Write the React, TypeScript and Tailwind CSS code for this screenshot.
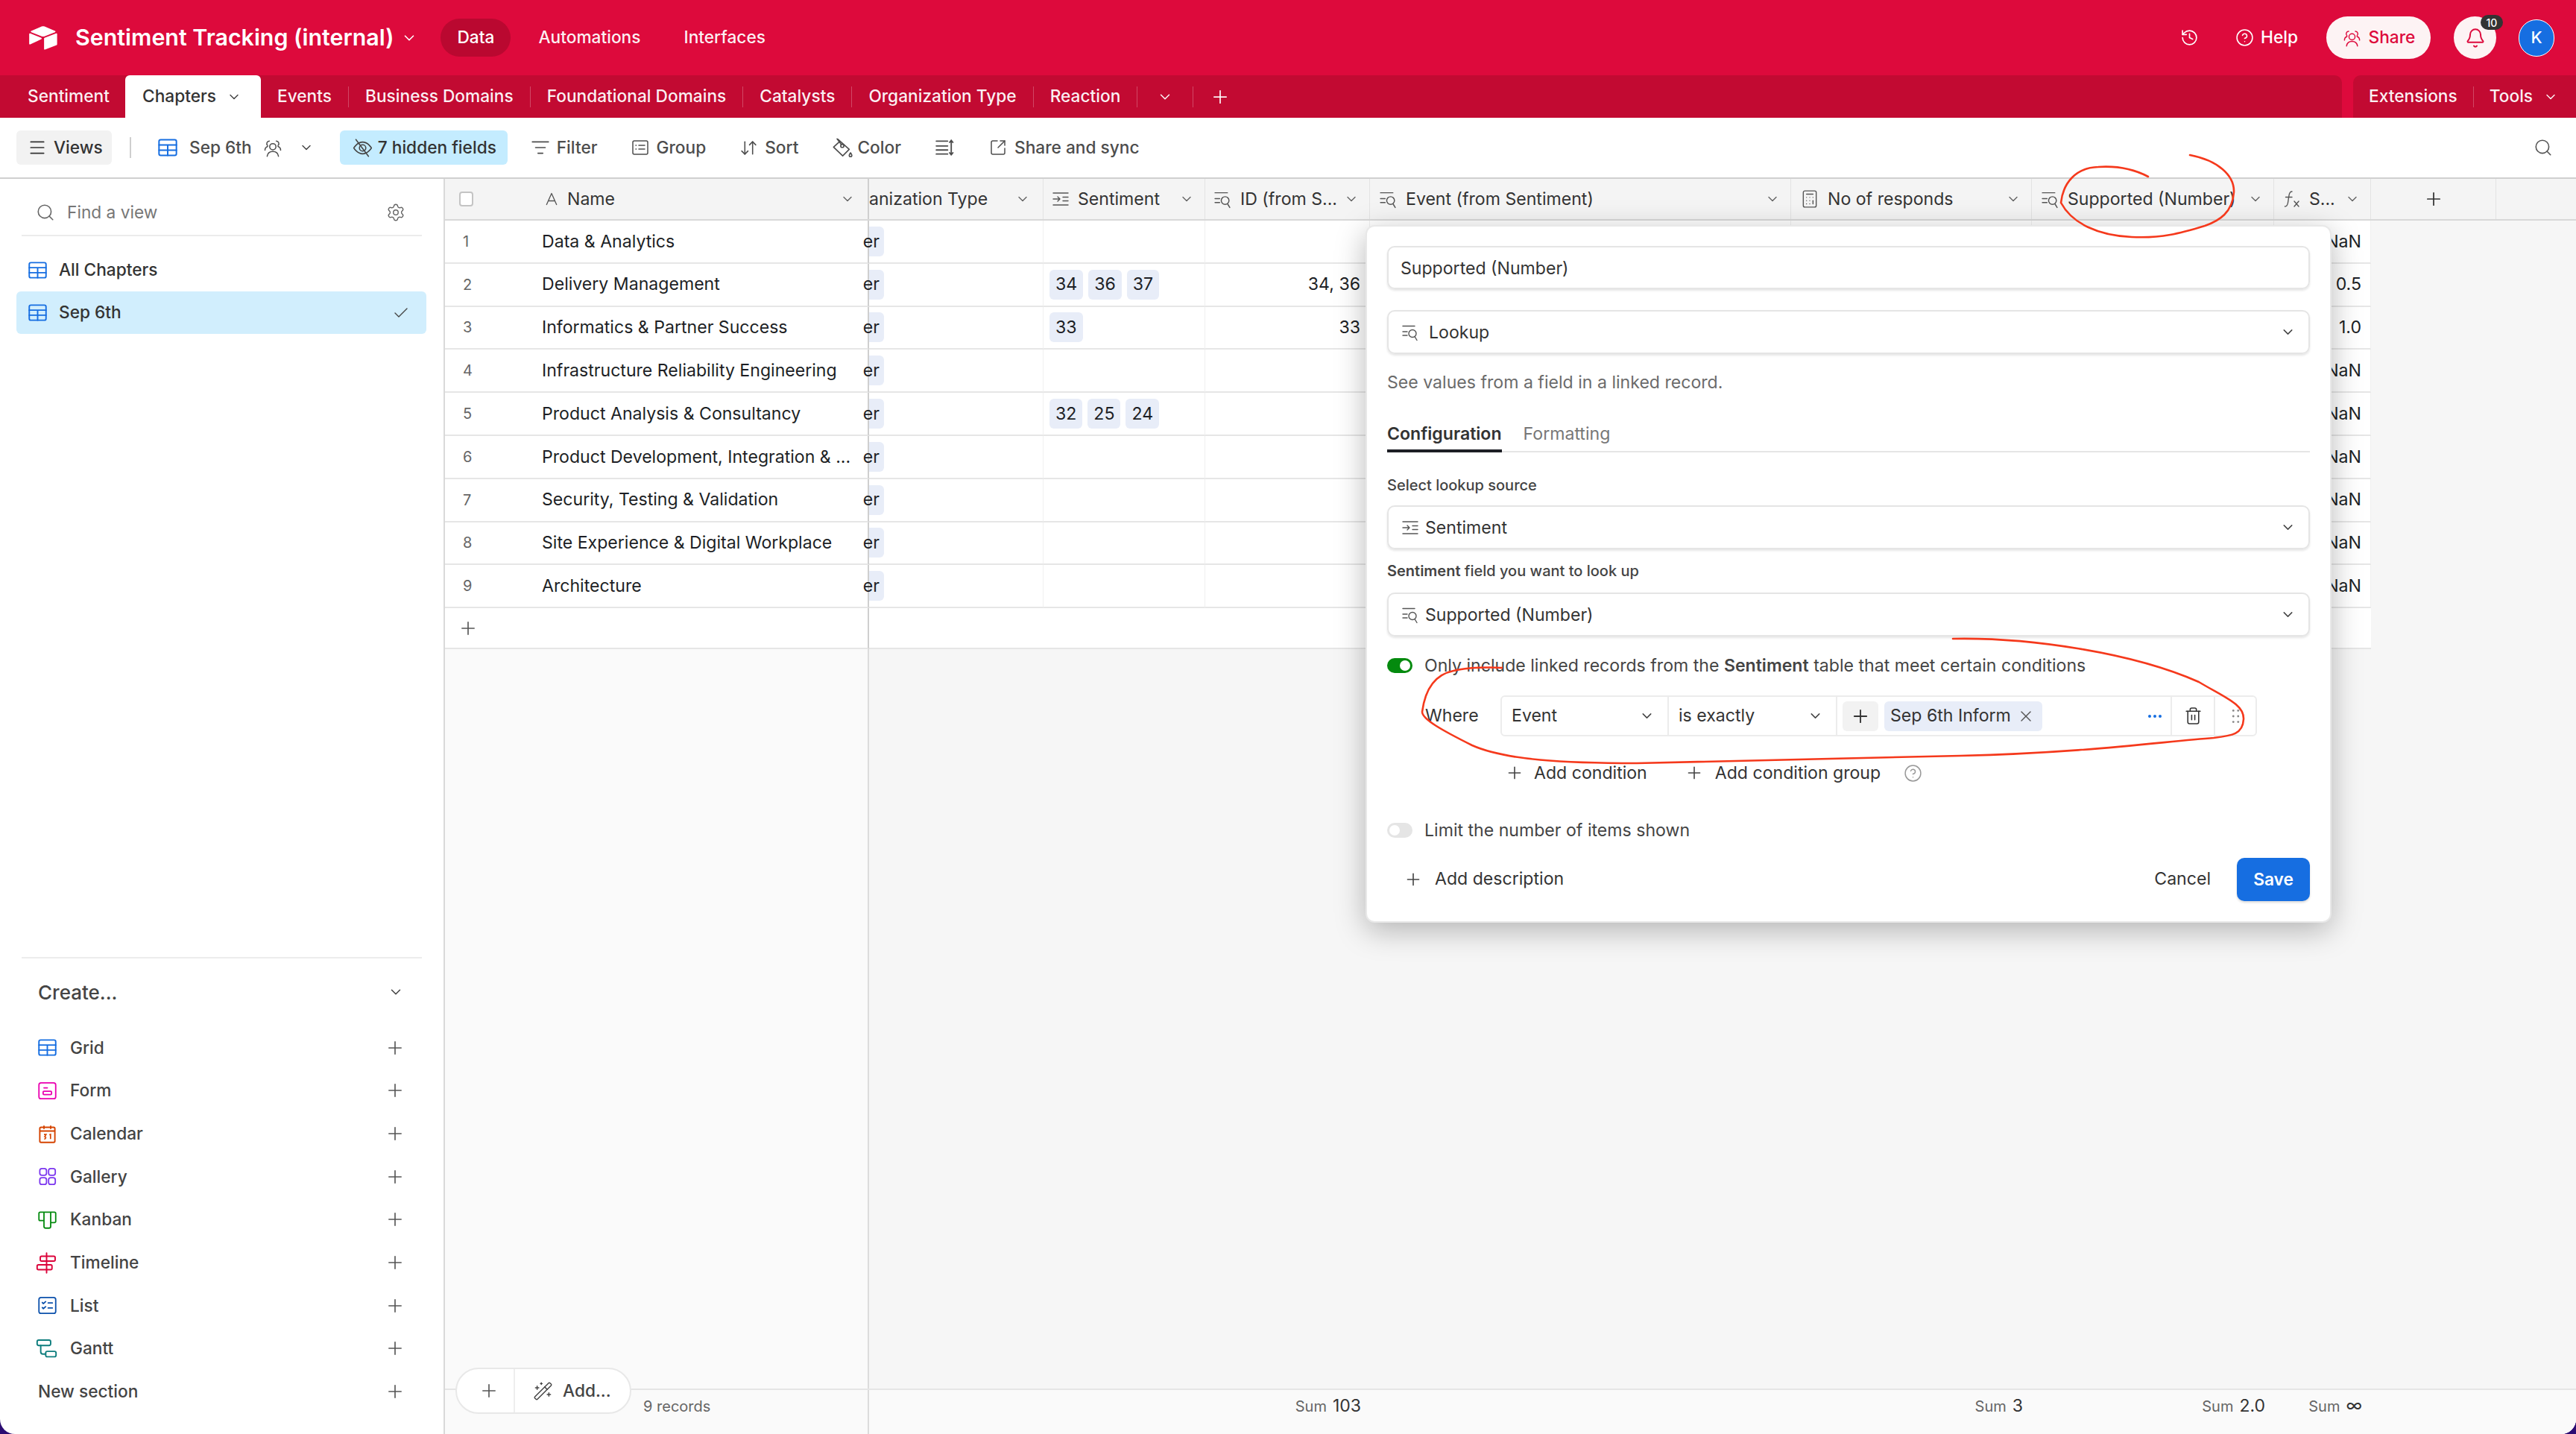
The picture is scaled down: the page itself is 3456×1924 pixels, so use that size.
import React from "react";
import { Bell, Check, ChevronDown, CircleHelp, History, ListFilter, Menu, Plus, Search, Settings, SquareArrowOutUpRight, Trash2, WandSparkles, X, Calculator, ArrowDownUp } from "lucide-react";

type P = { className?: string };
const S = ({ className, children, vb = "0 0 24 24", sw = 1.6 }: P & { children: React.ReactNode; vb?: string; sw?: number }) => (
  <svg viewBox={vb} fill="none" stroke="currentColor" strokeWidth={sw} strokeLinecap="round" strokeLinejoin="round" className={className}>{children}</svg>
);

const Logo = () => (
  <svg viewBox="0 0 200 170" className="w-[44px] h-[36px] text-white shrink-0" fill="currentColor">
    <path d="M90.04 12.37 24.08 39.66c-3.67 1.52-3.63 6.73.06 8.19l66.24 26.27c5.82 2.31 12.3 2.31 18.12 0l66.23-26.27c3.69-1.46 3.73-6.67.06-8.19L108.83 12.37c-6.02-2.49-12.78-2.49-18.79 0" />
    <path d="M105.31 88.46v65.62c0 3.12 3.15 5.26 6.05 4.11l73.81-28.65c1.68-.67 2.79-2.3 2.79-4.11V59.81c0-3.12-3.15-5.26-6.05-4.11l-73.81 28.65c-1.68.67-2.79 2.3-2.79 4.11" />
    <path d="m88.08 91.85-21.9 10.57-2.23 1.08-46.24 22.15c-2.93 1.42-6.67-.72-6.67-3.98V60.09c0-1.18.6-2.2 1.41-2.96.34-.34.72-.62 1.12-.84 1.1-.66 2.68-.84 4.02-.31l70.12 27.78c3.56 1.41 3.84 6.41.36 8.09" />
  </svg>
);

const LookupIcon = ({ className }: P) => (
  <S className={className} sw={1.4}><path d="M2 3.5h16M2 11h6M2 16h6" /><circle cx="15" cy="13.5" r="5" /><path d="m18.3 18 2.7 4.5" /></S>
);
const LinkIcon = ({ className }: P) => (
  <S className={className} sw={1.4}><path d="M2 4h20M2 20h20" /><path d="M2 12h9M8 9l3 3-3 3M15 9.500h7M15 14.500h7" /></S>
);
const TextIcon = ({ className }: P) => (<S className={className}><path d="M4 21 12 3l8 18M7 15h10" /></S>);
const FxIcon = ({ className }: P) => (
  <S className={className} sw={1.4}><path d="M12 2c-3 0-3.500 2-4 5l-1.500 10c-.500 3-1 5-4 5M3.500 9.500H12" /><path d="m15 15 6 7M21 15l-6 7" /></S>
);
const GridIcon = ({ className }: P) => (
  <S className={className} sw={1.7}><rect x="2" y="3" width="20" height="18" rx="2" /><path d="M2 9h20M2 15h20M12 9v12" /></S>
);
const People = ({ className }: P) => (
  <S className={className} sw={1.3}><circle cx="12" cy="11" r="3.600" /><path d="M5.500 22c.500-3.500 3-5.500 6.500-5.500s6 2 6.500 5.500M8 4.500a3 3 0 0 0-2 5.200M3 15c0-2 .8-3.500 3-4.300M16 4.500a3 3 0 0 1 2 5.200M21 15c0-2-.8-3.500-3-4.300" /></S>
);
const EyeOff = ({ className }: P) => (
  <S className={className} sw={1.4}><path d="M1.500 12S5.500 5 12 5s10.500 7 10.500 7-4 7-10.500 7S1.500 12 1.500 12Z" /><circle cx="12" cy="12" r="3.800" /><path d="m4 2 15 20" /></S>
);
const GroupIcon = ({ className }: P) => (
  <S className={className} sw={1.5}><rect x="2" y="3" width="20" height="18" rx="2" /><path d="M6 9h.6M6 14h.6M10 9h8M10 14h8" /></S>
);
const ColorIcon = ({ className }: P) => (
  <S className={className} sw={1.4}><path d="M7 2.500 20 14l-7.500 7.500L2 11.500 9 5" /><circle cx="12" cy="10" r="1.800" /><path d="M6 2l5 6.500" /><path d="M21.500 18c1 1.500 1.500 2.200 1.500 3a1.500 1.500 0 0 1-3 0c0-.8.500-1.500 1.500-3Z" /></S>
);
const RowHeight = ({ className }: P) => (
  <S className={className} sw={1.7}><path d="M2 4h14M2 10h14M2 15h14M2 20h14M20.500 3v18M18.500 5.500l2-2.500 2 2.500M18.500 18.500l2 2.500 2-2.500" /></S>
);
const Grip = ({ className }: P) => (
  <svg viewBox="0 0 12 24" fill="currentColor" className={className}><circle cx="3" cy="5" r="1.300" /><circle cx="9" cy="5" r="1.300" /><circle cx="3" cy="12" r="1.300" /><circle cx="9" cy="12" r="1.300" /><circle cx="3" cy="19" r="1.300" /><circle cx="9" cy="19" r="1.300" /></svg>
);

const FormIcon = ({ className }: P) => (<S className={className}><rect x="2" y="2.500" width="20" height="19" rx="2.500" /><path d="M8 8.500h4" /><rect x="7" y="12.500" width="10" height="4" rx="1" /></S>);
const CalendarIcon = ({ className }: P) => (
  <svg viewBox="0 0 24 24" fill="none" stroke="currentColor" strokeWidth="1.700" className={className}><rect x="3" y="4" width="18" height="18" rx="1.500" /><path d="M3 8.500h18M8 2v4M16 2v4" /><path d="M8 12.500h2.500L9 15c1.500 0 1.700 3-.8 3M14.500 13l1.300-.6V18" strokeWidth="1.500" /></svg>
);
const GalleryIcon = ({ className }: P) => (<S className={className}><rect x="3" y="2.500" width="8" height="8" rx="2.500" /><rect x="13.500" y="2.500" width="8" height="8" rx="2.500" /><rect x="3" y="13.500" width="8" height="8" rx="2.500" /><rect x="13.500" y="13.500" width="8" height="8" rx="2.500" /></S>);
const KanbanIcon = ({ className }: P) => (<S className={className}><path d="M2 4.500A1.500 1.500 0 0 1 3.500 3h17A1.500 1.500 0 0 1 22 4.500V14a1.500 1.500 0 0 1-1.500 1.500H16V20a2 2 0 0 1-2 2h-4a2 2 0 0 1-2-2v-7H3.500A1.500 1.500 0 0 1 2 11.500ZM8 3v10M16 3v12.500" /></S>);
const TimelineIcon = ({ className }: P) => (<S className={className}><path d="M12 1v22M12 4.500h8a1.500 1.500 0 0 1 1.500 1.500v2.500A1.500 1.500 0 0 1 20 10H6.500A1.500 1.500 0 0 1 5 8.500V6a1.500 1.500 0 0 1 1.500-1.500H12M3 14h13.500a1.500 1.500 0 0 1 1.500 1.500V18a1.500 1.500 0 0 1-1.500 1.500H3A1.500 1.500 0 0 1 1.500 18v-2.500A1.500 1.500 0 0 1 3 14Z" /></S>);
const ListIcon = ({ className }: P) => (<S className={className}><rect x="2" y="2.500" width="20" height="19" rx="2.500" /><path d="m6 8.500 1.300 1.300L10 7.500M6 14.500l1.300 1.300 2.700-2.300M13 9h5M13 15h5" /></S>);
const GanttIcon = ({ className }: P) => (<S className={className}><rect x="1.500" y="2.500" width="15" height="6" rx="1.800" /><rect x="11" y="15" width="11.500" height="6" rx="1.800" /><path d="M5.500 8.500v7a2.500 2.500 0 0 0 2.500 2.500h3" /></S>);

const tabs = ["Events", "Business Domains", "Foundational Domains", "Catalysts", "Organization Type", "Reaction"];
const rows: { n: number; name: string; chips: string[]; id: string; sum: string }[] = [
  { n: 1, name: "Data & Analytics", chips: [], id: "", sum: "NaN" },
  { n: 2, name: "Delivery Management", chips: ["34", "36", "37"], id: "34, 36", sum: "0.5" },
  { n: 3, name: "Informatics & Partner Success", chips: ["33"], id: "33", sum: "1.0" },
  { n: 4, name: "Infrastructure Reliability Engineering", chips: [], id: "", sum: "NaN" },
  { n: 5, name: "Product Analysis & Consultancy", chips: ["32", "25", "24"], id: "", sum: "NaN" },
  { n: 6, name: "Product Development, Integration & ...", chips: [], id: "", sum: "NaN" },
  { n: 7, name: "Security, Testing & Validation", chips: [], id: "", sum: "NaN" },
  { n: 8, name: "Site Experience & Digital Workplace", chips: [], id: "", sum: "NaN" },
  { n: 9, name: "Architecture", chips: [], id: "", sum: "NaN" },
];
const creates = [
  { label: "Grid", icon: <GridIcon className="w-[27px] h-[27px] text-[#166ee1]" /> },
  { label: "Form", icon: <FormIcon className="w-[27px] h-[27px] text-[#ea00b0]" /> },
  { label: "Calendar", icon: <CalendarIcon className="w-[27px] h-[27px] text-[#d54401]" /> },
  { label: "Gallery", icon: <GalleryIcon className="w-[27px] h-[27px] text-[#7c37ef]" /> },
  { label: "Kanban", icon: <KanbanIcon className="w-[27px] h-[27px] text-[#048a0e]" /> },
  { label: "Timeline", icon: <TimelineIcon className="w-[29px] h-[29px] text-[#dc043b]" /> },
  { label: "List", icon: <ListIcon className="w-[27px] h-[27px] text-[#0d52ac]" /> },
  { label: "Gantt", icon: <GanttIcon className="w-[29px] h-[29px] text-[#0f7e7e]" /> },
];

const Chev = ({ className = "w-[20px] h-[20px] text-[#555]" }: P) => <ChevronDown strokeWidth={1.7} className={className} />;

const Head = ({ w, icon, label, cls = "" }: { w: string; icon?: React.ReactNode; label: string; cls?: string }) => (
  <div className={`${w} ${cls} h-full shrink-0 flex items-center border-r border-[#e3e3e3] pr-[14px]`}>
    {icon}
    <span className="ml-[11px] whitespace-nowrap text-[23.100px] font-normal text-[#333]">{label}</span>
    <Chev className="ml-auto w-[20px] h-[20px] text-[#666]" />
  </div>
);

const SelectBox = ({ icon, label, gap = "ml-[8px]" }: { icon: React.ReactNode; label: string; gap?: string }) => (
  <div className="h-[59px] flex items-center pl-[17px] pr-[17px] rounded-[10px] border-2 border-[#e5e5e5] shadow-[0_2px_3px_rgba(0,0,0,0.1)] text-[#333]">
    {icon}
    <span className={`${gap} pt-[2px]`}>{label}</span>
    <Chev className="ml-auto w-[21px] h-[21px] text-[#444]" />
  </div>
);

export default function App() {
  return (
    <div className="relative w-[3456px] h-[1924px] overflow-hidden bg-[#2b0c72] font-['Inter',sans-serif] font-medium text-[22.700px] text-[#1d1f25]">
      <div className="w-full h-full flex flex-col overflow-hidden rounded-b-[20px] bg-white">
        {/* top bar */}
        <header className="h-[101px] shrink-0 bg-[#dd0a3c] flex items-center text-white">
          <div className="ml-[36px]"><Logo /></div>
          <span className="ml-[21px] text-[30.400px] font-semibold whitespace-nowrap">Sentiment Tracking (internal)</span>
          <ChevronDown strokeWidth={1.8} className="ml-[10px] w-[22px] h-[22px]" />
          <div className="ml-[31px] h-[51px] px-[22px] rounded-full bg-[#ba0830] flex items-center">Data</div>
          <div className="ml-[15px] px-[22px] flex items-center text-white/95">Automations</div>
          <div className="ml-[14px] px-[22px] flex items-center text-white/95">Interfaces</div>
          <History strokeWidth={1.600} className="ml-auto w-[25px] h-[25px]" />
          <CircleHelp strokeWidth={1.500} className="ml-[49px] w-[25px] h-[25px]" />
          <span className="ml-[9px]">Help</span>
          <div className="ml-[38px] h-[57px] w-[140px] rounded-full bg-[#fdf3f4] flex items-center justify-center gap-[9px] text-[#dd0a3c]">
            <People className="w-[27px] h-[27px]" /><span>Share</span>
          </div>
          <div className="relative ml-[31px] w-[57px] h-[57px] rounded-full bg-[#fdf3f4] flex items-center justify-center text-[#dd0a3c]">
            <Bell strokeWidth={1.700} className="w-[28px] h-[28px]" />
            <span className="absolute -top-[2px] right-[-9px] w-[30px] h-[20px] rounded-full bg-[#333] text-white text-[14px] flex items-center justify-center">10</span>
          </div>
          <div className="ml-[30px] mr-[29px] w-[48px] h-[50px] rounded-full bg-[#166ee1] border border-white flex items-center justify-center text-white text-[22px]">K</div>
        </header>

        {/* tabs */}
        <nav className="h-[57px] shrink-0 bg-[#dd0a3c] flex text-white/95">
          <div className="w-[3142px] h-full bg-[#c20a32] rounded-tr-[10px] flex items-center">
            <span className="w-[168px] pl-[37px]">Sentiment</span>
            <div className="h-full w-[182px] bg-white rounded-t-[6px] text-[#333] flex items-center pl-[23px]">
              <span>Chapters</span>
              <Chev className="ml-[14px] w-[20px] h-[20px] text-[#444]" />
            </div>
            {tabs.map((t) => (
              <React.Fragment key={t}>
                <span className="px-[22px] whitespace-nowrap">{t}</span>
                <span className="h-[28px] w-px bg-white/25" />
              </React.Fragment>
            ))}
            <ChevronDown strokeWidth={1.700} className="mx-[26px] w-[22px] h-[22px]" />
            <span className="h-[28px] w-px bg-white/25" />
            <Plus strokeWidth={1.500} className="ml-[22px] w-[28px] h-[28px]" />
          </div>
          <div className="ml-auto w-[299px] h-full bg-[#c20a32] rounded-tl-[10px] flex items-center">
            <span className="ml-[21px]">Extensions</span>
            <span className="ml-[21px] h-[28px] w-px bg-white/25" />
            <span className="ml-[21px]">Tools</span>
            <ChevronDown strokeWidth={1.700} className="ml-[14px] w-[20px] h-[20px]" />
          </div>
        </nav>

        {/* toolbar */}
        <div className="h-[82px] shrink-0 flex items-center border-b-2 border-[#d0d0d0] text-[#4d4d4d]">
          <div className="ml-[22px] w-[128px] h-[46px] rounded-[6px] bg-[#f2f2f2] flex items-center pl-[15px] text-[#333]">
            <Menu strokeWidth={1.600} className="w-[26px] h-[26px]" /><span className="ml-[9px]">Views</span>
          </div>
          <span className="ml-[24px] w-[2px] h-[28px] bg-[#cfcfcf]" />
          <GridIcon className="ml-[35px] w-[28px] h-[28px] text-[#166ee1]" />
          <span className="ml-[15px]">Sep 6th</span>
          <People className="ml-[14px] w-[28px] h-[28px]" />
          <Chev className="ml-[21px] w-[20px] h-[20px] text-[#444]" />
          <div className="ml-[35px] w-[225px] h-[46px] rounded-[6px] bg-[#c4ecff] flex items-center pl-[17px] text-[#333]">
            <EyeOff className="w-[27px] h-[27px] text-[#444]" /><span className="ml-[7px] whitespace-nowrap">7 hidden fields</span>
          </div>
          <ListFilter strokeWidth={1.500} className="ml-[31px] w-[26px] h-[26px]" /><span className="ml-[9px]">Filter</span>
          <GroupIcon className="ml-[45px] w-[24px] h-[24px]" /><span className="ml-[10px]">Group</span>
          <ArrowDownUp strokeWidth={1.500} className="ml-[45px] w-[25px] h-[25px]" /><span className="ml-[9px]">Sort</span>
          <ColorIcon className="ml-[45px] w-[28px] h-[28px]" /><span className="ml-[6px]">Color</span>
          <RowHeight className="ml-[45px] w-[26px] h-[26px]" />
          <SquareArrowOutUpRight strokeWidth={1.500} className="ml-[47px] w-[24px] h-[24px]" /><span className="ml-[10px] whitespace-nowrap">Share and sync</span>
          <Search strokeWidth={1.500} className="ml-auto mr-[31px] w-[26px] h-[26px] text-[#555]" />
        </div>

        <div className="flex-1 min-h-0 flex">
          {/* sidebar */}
          <aside className="w-[597px] shrink-0 border-r-2 border-[#d9d9d9] flex flex-col text-[#444]">
            <div className="mx-[29px] h-[77px] pt-[15px] border-b-2 border-[#ececec] flex items-center">
              <Search strokeWidth={1.500} className="ml-[19px] w-[26px] h-[26px] text-[#666]" />
              <span className="ml-[16px] font-normal text-[#777]">Find a view</span>
              <Settings strokeWidth={1.300} className="ml-auto mr-[22px] w-[26px] h-[26px] text-[#666]" />
            </div>
            <div className="mt-[17px] ml-[22px] w-[550px] h-[57px] flex items-center pl-[15px] text-[#333]">
              <GridIcon className="w-[27px] h-[27px] text-[#166ee1]" /><span className="ml-[15px]">All Chapters</span>
            </div>
            <div className="ml-[22px] w-[550px] h-[57px] rounded-[6px] bg-[#d1eefd] flex items-center pl-[15px] pr-[22px] text-[#333]">
              <GridIcon className="w-[27px] h-[27px] text-[#166ee1]" /><span className="ml-[15px]">Sep 6th</span>
              <Check strokeWidth={1.400} className="ml-auto w-[24px] h-[24px] text-[#444]" />
            </div>
            <div className="mt-auto mx-[29px] border-t-2 border-[#ececec]" />
            <div className="h-[91px] flex items-center pl-[51px] pr-[53px]">
              <span className="text-[26px] text-[#444]">Create...</span>
              <Chev className="ml-auto w-[22px] h-[22px] text-[#444]" />
            </div>
            {creates.map((c) => (
              <div key={c.label} className="h-[57.700px] flex items-center">
                <span className="w-[94px] shrink-0 flex justify-end pr-[17px]">{c.icon}</span>
                <span>{c.label}</span>
                <Plus strokeWidth={1.400} className="ml-auto mr-[51px] w-[28px] h-[28px] text-[#555]" />
              </div>
            ))}
            <div className="h-[57.700px] mb-[28px] flex items-center pl-[51px]">
              <span>New section</span>
              <Plus strokeWidth={1.400} className="ml-auto mr-[51px] w-[28px] h-[28px] text-[#555]" />
            </div>
          </aside>

          {/* grid */}
          <main className="relative flex-1 min-w-0 flex flex-col bg-[#f6f6f6]">
            <div className="h-[56px] shrink-0 flex border-b-2 border-[#d8d8d8] bg-[#f4f4f4]">
              <div className="w-[569px] shrink-0 h-full border-r-2 border-[#cfcfcf] flex items-center pr-[17px]">
                <span className="ml-[19px] w-[19px] h-[20px] rounded-[4px] border-2 border-[#c4c4c4] bg-white" />
                <TextIcon className="ml-[95px] w-[20px] h-[20px] text-[#555]" />
                <span className="ml-[11px] text-[23.100px] font-normal text-[#333]">Name</span>
                <Chev className="ml-auto w-[20px] h-[20px] text-[#666]" />
              </div>
              <div className="w-[234px] shrink-0 h-full flex items-center border-r border-[#e3e3e3] pr-[17px] text-[23.100px] font-normal text-[#333] whitespace-nowrap">
                <span>anization Type</span><Chev className="ml-auto w-[20px] h-[20px] text-[#666]" />
              </div>
              <Head w="w-[217px]" cls="pl-[11px]" icon={<LinkIcon className="w-[24px] h-[24px] text-[#555] shrink-0" />} label="Sentiment" />
              <Head w="w-[221px]" cls="pl-[11px]" icon={<LookupIcon className="w-[25px] h-[25px] text-[#555] shrink-0" />} label="ID (from S..." />
              <Head w="w-[565px]" cls="pl-[12px]" icon={<LookupIcon className="w-[25px] h-[25px] text-[#555] shrink-0" />} label="Event (from Sentiment)" />
              <Head w="w-[323px]" cls="pl-[12px]" icon={<Calculator strokeWidth={1.300} className="w-[26px] h-[26px] text-[#555] shrink-0" />} label="No of responds" />
              <Head w="w-[325px]" cls="pl-[12px]" icon={<LookupIcon className="w-[25px] h-[25px] text-[#555] shrink-0" />} label="Supported (Number)" />
              <Head w="w-[130px]" cls="pl-[12px]" icon={<FxIcon className="w-[24px] h-[24px] text-[#555] shrink-0" />} label="S..." />
              <div className="w-[168px] shrink-0 h-full border-r border-[#e3e3e3] flex items-center justify-center">
                <Plus strokeWidth={1.500} className="w-[28px] h-[28px] text-[#333]" />
              </div>
            </div>

            {rows.map((r) => (
              <div key={r.n} className="h-[57.800px] shrink-0 flex text-[23.100px] font-normal">
                <div className="w-[569px] shrink-0 bg-white border-b-2 border-r-2 border-b-[#e6e6e6] border-r-[#cfcfcf] flex items-center">
                  <span className="w-[130px] pl-[24px] text-[20px] text-[#666]">{r.n}</span>
                  <span className="whitespace-nowrap">{r.name}</span>
                </div>
                <div className="w-[234px] shrink-0 bg-white border-b-2 border-[#e6e6e6] border-r border-r-[#f0f0f0] flex items-center">
                  <span className="h-[40px] w-[20px] rounded-r-[6px] bg-[#e8edf8] flex items-center justify-end pr-[6px]">er</span>
                </div>
                <div className="w-[217px] shrink-0 bg-white border-b-2 border-b-[#e6e6e6] border-r border-r-[#f0f0f0] flex items-center pl-[8px] gap-[7px]">
                  {r.chips.map((c) => (
                    <span key={c} className="h-[40px] px-[8px] rounded-[6px] bg-[#e8edf8] flex items-center">{c}</span>
                  ))}
                </div>
                <div className="w-[221px] shrink-0 bg-white border-b-2 border-b-[#e6e6e6] border-r border-r-[#f0f0f0] flex items-center justify-end pr-[12px]">{r.id}</div>
                <div className="w-[565px] shrink-0 bg-white border-b-2 border-b-[#e6e6e6] border-r border-r-[#f0f0f0]" />
                <div className="w-[323px] shrink-0 bg-white border-b-2 border-b-[#e6e6e6] border-r border-r-[#f0f0f0]" />
                <div className="w-[325px] shrink-0 bg-white border-b-2 border-b-[#e6e6e6] border-r border-r-[#f0f0f0]" />
                <div className="w-[130px] shrink-0 bg-white border-b-2 border-b-[#e6e6e6] border-r border-r-[#f0f0f0] flex items-center justify-end pr-[12px]">{r.sum}</div>
              </div>
            ))}
            <div className="h-[55px] shrink-0 flex">
              <div className="w-[569px] shrink-0 bg-white border-b-2 border-r-2 border-b-[#e6e6e6] border-r-[#cfcfcf] flex items-center">
                <Plus strokeWidth={1.400} className="ml-[17px] w-[28px] h-[28px] text-[#555]" />
              </div>
              <div className="w-[2015px] shrink-0 bg-white border-b-2 border-[#e6e6e6]" />
            </div>

            <div className="flex-1 min-h-0 flex">
              <div className="w-[569px] shrink-0 bg-[#fafafa] border-r-2 border-[#dcdcdc]" />
            </div>

            {/* summary */}
            <div className="h-[61px] shrink-0 bg-[#fafafa] border-t-2 border-[#e5e5e5] flex text-[20px] font-normal text-[#666] pb-[16px]">
              <div className="w-[569px] shrink-0 border-r-2 border-[#dcdcdc] -mb-[16px] pb-[16px] flex items-center">
                <span className="ml-[266px]">9 records</span>
              </div>
              <div className="w-[672px] shrink-0 flex items-center justify-end pr-[12px] gap-[8px]">
                <span>Sum</span><span className="text-[23px] text-[#333]">103</span>
              </div>
              <div className="w-[888px] shrink-0 flex items-center justify-end pr-[12px] gap-[8px]">
                <span>Sum</span><span className="text-[23px] text-[#333]">3</span>
              </div>
              <div className="w-[325px] shrink-0 flex items-center justify-end pr-[12px] gap-[8px]">
                <span>Sum</span><span className="text-[23px] text-[#333]">2.0</span>
              </div>
              <div className="w-[130px] shrink-0 flex items-center justify-end pr-[12px] gap-[8px]">
                <span>Sum</span><span className="text-[23px] text-[#333]">∞</span>
              </div>
            </div>

            {/* add pill */}
            <div className="absolute left-[14px] bottom-[27px] w-[236px] h-[62px] rounded-full bg-white border-2 border-[#e8e8e8] flex items-center text-[#444]">
              <div className="w-[78px] h-full pl-[10px] border-r-2 border-[#eeeeee] flex items-center justify-center">
                <Plus strokeWidth={1.400} className="w-[28px] h-[28px] text-[#555]" />
              </div>
              <WandSparkles strokeWidth={1.300} className="ml-[24px] w-[27px] h-[27px] text-[#444]" />
              <span className="ml-[13px]">Add...</span>
            </div>

            {/* field config popover */}
            <section className="absolute left-[1235px] top-[62px] w-[1296px] rounded-[12px] bg-white border-2 border-[#e8e8e8] shadow-[0_10px_40px_rgba(0,0,0,0.28)] px-[27px] pt-[26px] pb-[27px] text-[23.100px] font-normal text-[#333]">
              <div className="h-[58px] flex items-center pl-[16px] pt-[2px] rounded-[10px] border-2 border-[#e5e5e5] shadow-[0_2px_3px_rgba(0,0,0,0.1)]">Supported (Number)</div>
              <div className="mt-[28px]"><SelectBox icon={<LookupIcon className="w-[24px] h-[24px] text-[#555]" />} label="Lookup" gap="ml-[13px]" /></div>
              <p className="mt-[23px] h-[30px] leading-[30px] text-[#6b6b6b]">See values from a field in a linked record.</p>
              <div className="mt-[30px] h-[49px] flex border-b-2 border-[#e5e5e5]">
                <span className="h-[49px] pt-[7px] border-b-[4px] border-[#1d1f25] font-semibold text-[#333]">Configuration</span>
                <span className="ml-[29px] pt-[7px] text-[#777]">Formatting</span>
              </div>
              <p className="mt-[32px] h-[24px] leading-[24px] text-[20px] font-medium text-[#444]">Select lookup source</p>
              <div className="mt-[15px]"><SelectBox icon={<LinkIcon className="w-[24px] h-[24px] text-[#555]" />} label="Sentiment" /></div>
              <p className="mt-[17px] h-[24px] leading-[24px] text-[20px] font-medium text-[#444]"><b className="font-semibold">Sentiment</b> field you want to look up</p>
              <div className="mt-[17px]"><SelectBox icon={<LookupIcon className="w-[24px] h-[24px] text-[#555]" />} label="Supported (Number)" /></div>

              <div className="mt-[27px] h-[24px] flex items-center">
                <span className="relative w-[34px] h-[20px] rounded-full bg-[#048a0e]">
                  <span className="absolute right-[3px] top-[3px] w-[14px] h-[14px] rounded-full bg-white" />
                </span>
                <span className="ml-[16px] whitespace-nowrap text-[#444]">Only include linked records from the <b className="font-semibold">Sentiment</b> table that meet certain conditions</span>
              </div>

              <div className="mt-[28px] h-[55px] flex items-center">
                <span className="ml-[51px] w-[101px] text-[#333]">Where</span>
                <div className="w-[1015px] h-full rounded-[6px] border-2 border-[#ececec] flex items-center text-[#333]">
                  <div className="w-[224px] h-full border-r-2 border-[#ececec] flex items-center pl-[13px] pr-[17px]"><span>Event</span><Chev className="ml-auto w-[21px] h-[21px] text-[#444]" /></div>
                  <div className="w-[226px] h-full border-r-2 border-[#ececec] flex items-center pl-[13px] pr-[17px]"><span>is exactly</span><Chev className="ml-auto w-[21px] h-[21px] text-[#444]" /></div>
                  <div className="w-[449px] h-full border-r-2 border-[#ececec] flex items-center pl-[7px] pr-[12px]">
                    <span className="w-[48px] h-[40px] rounded-[6px] bg-[#f2f2f2] flex items-center justify-center"><Plus strokeWidth={1.600} className="w-[28px] h-[28px] text-[#333]" /></span>
                    <span className="ml-[8px] w-[212px] h-[40px] rounded-[6px] bg-[#e8edf8] flex items-center pl-[8px] whitespace-nowrap">Sep 6th Inform<X strokeWidth={1.400} className="ml-[8px] w-[24px] h-[24px] text-[#555]" /></span>
                    <span className="ml-auto flex gap-[3px]"><span className="w-[4px] h-[4px] rounded-full bg-[#166ee1]" /><span className="w-[4px] h-[4px] rounded-full bg-[#166ee1]" /><span className="w-[4px] h-[4px] rounded-full bg-[#166ee1]" /></span>
                  </div>
                  <div className="w-[58px] h-full border-r-2 border-[#ececec] flex items-center justify-center"><Trash2 strokeWidth={1.500} className="w-[25px] h-[25px] text-[#333]" /></div>
                  <div className="flex-1 flex items-center justify-center"><Grip className="w-[13px] h-[26px] text-[#888]" /></div>
                </div>
              </div>

              <div className="mt-[34px] h-[30px] flex items-center text-[#333]">
                <Plus strokeWidth={1.500} className="ml-[158px] w-[26px] h-[26px] text-[#444]" />
                <span className="ml-[13px]">Add condition</span>
                <Plus strokeWidth={1.500} className="ml-[50px] w-[26px] h-[26px] text-[#444]" />
                <span className="ml-[15px]">Add condition group</span>
                <CircleHelp strokeWidth={1.400} className="ml-[31px] w-[25px] h-[25px] text-[#999]" />
              </div>

              <div className="mt-[47px] h-[30px] flex items-center">
                <span className="relative w-[34px] h-[20px] rounded-full bg-[#e5e5e5]">
                  <span className="absolute left-[3px] top-[3px] w-[14px] h-[14px] rounded-full bg-white" />
                </span>
                <span className="ml-[16px] text-[#444]">Limit the number of items shown</span>
              </div>

              <div className="mt-[22px] h-[58px] flex items-center text-[#333]">
                <Plus strokeWidth={1.500} className="ml-[22px] w-[26px] h-[26px] text-[#444]" />
                <span className="ml-[16px] -mt-[2px]">Add description</span>
                <span className="ml-auto -mt-[2px]">Cancel</span>
                <span className="ml-[35px] w-[98px] h-[58px] rounded-[10px] bg-[#166ee1] text-[22.700px] text-white font-semibold flex items-center justify-center shadow-[0_2px_3px_rgba(0,0,0,0.15)]">Save</span>
              </div>
            </section>
          </main>
        </div>
      </div>

      {/* hand-drawn annotations */}
      <svg viewBox="0 0 3456 1924" fill="none" stroke="#f5391c" strokeWidth="2.600" strokeLinecap="round" className="absolute inset-0 w-full h-full pointer-events-none">
        <path d="M2938 208C2975 215 2998 235 2997 258C2995 285 2978 296 2958 303C2925 313 2900 320 2860 318C2815 316 2780 300 2765 272C2768 245 2785 225 2815 224C2845 222 2865 228 2882 237" />
        <path d="M2620 857C2720 855 2860 875 2950 915C2985 936 3011 945 3010 965C3009 985 2995 987 2970 990C2900 995 2800 1010 2630 1014C2450 1018 2300 1022 2196 1024C2100 1024 2020 1020 1975 1000C1935 980 1908 965 1908 955C1912 925 1925 905 1950 900C1970 895 2000 895 2015 896" />
      </svg>
    </div>
  );
}
